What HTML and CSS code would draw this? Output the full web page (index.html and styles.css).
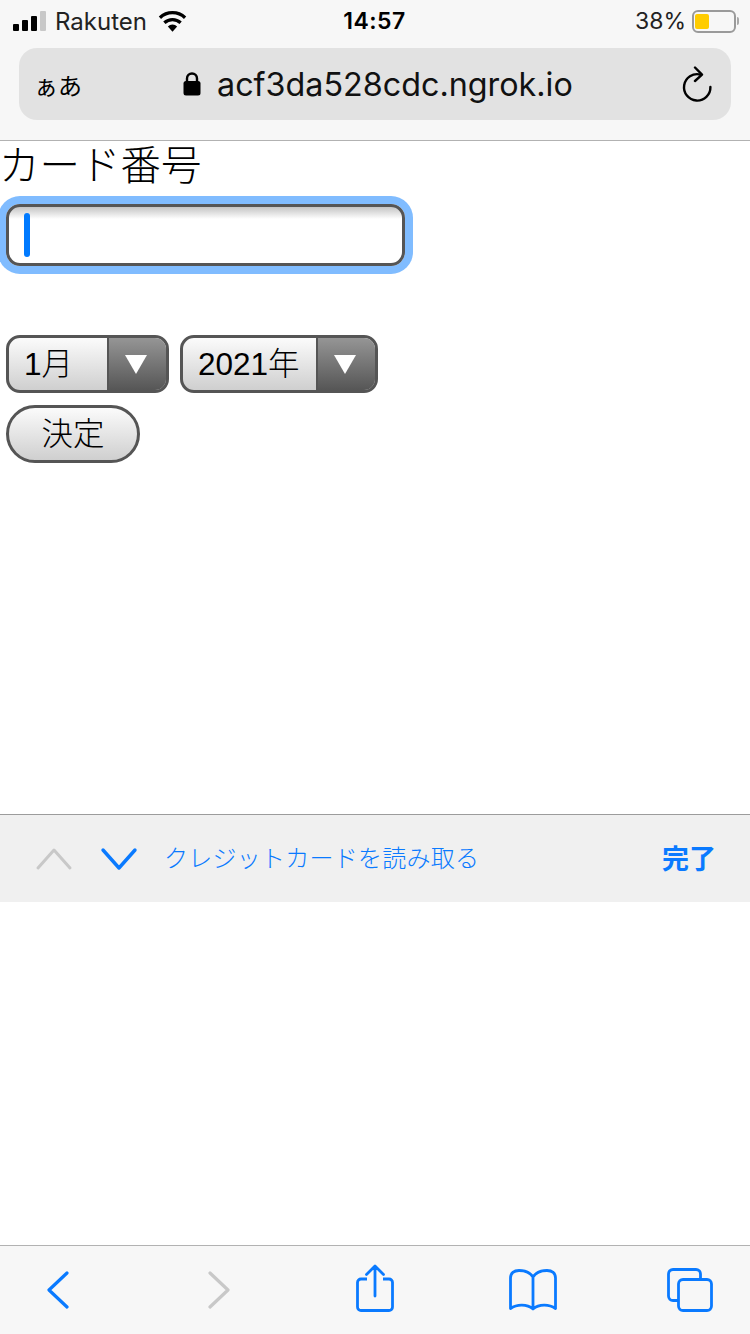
FILE: index.html
```html
<!DOCTYPE html>
<html lang="ja">
<head>
    <meta charset="UTF-8">
    <meta name="viewport" content="width=device-width, initial-scale=1.0">
    <title>カード番号</title>
    <link rel="stylesheet" href="styles.css">
</head>
<body>
    <header class="browser-top">
        <div class="status-bar">
            <div class="status-left">
                <div class="signal"><span></span><span></span><span></span><span class="off"></span></div>
                <span class="carrier">Rakuten</span>
                <svg class="wifi" width="31" height="24" viewBox="0 0 32 24">
                    <path d="M16 23 L11.2 17.6 A7 7 0 0 1 20.8 17.6 Z" fill="#000"/>
                    <path d="M7.6 13.8 A12.4 12.4 0 0 1 24.4 13.8" fill="none" stroke="#000" stroke-width="3.4"/>
                    <path d="M3 8.6 A19 19 0 0 1 29 8.6" fill="none" stroke="#000" stroke-width="3.4"/>
                </svg>
            </div>
            <div class="clock">14:57</div>
            <div class="status-right">
                <span class="percent">38%</span>
                <div class="battery"><div class="battery-level"></div></div>
                <div class="battery-tip"></div>
            </div>
        </div>
        <div class="url-bar">
            <span class="text-size">ぁあ</span>
            <div class="address">
                <svg width="18" height="26" viewBox="0 0 18 26">
                    <path d="M4 11 V7.5 A5 5 0 0 1 14 7.5 V11" fill="none" stroke="#000" stroke-width="2.4"/>
                    <rect x="0.5" y="10" width="17" height="14.5" rx="2.5" fill="#000"/>
                </svg>
                <span>acf3da528cdc.ngrok.io</span>
            </div>
            <svg class="reload" width="32" height="38" viewBox="0 0 32 38">
                <path d="M19.5 8.6 A13.2 13.2 0 1 0 29.4 21" fill="none" stroke="#000" stroke-width="2.4" stroke-linecap="round"/>
                <path d="M14 1.5 L21 8.6 L14 15" fill="none" stroke="#000" stroke-width="2.4" stroke-linecap="round" stroke-linejoin="round"/>
            </svg>
        </div>
    </header>

    <main class="content">
        <div class="card-label">カード番号</div>
        <div class="card-input"><div class="caret"></div></div>
        <div class="expiry">
            <div class="select month">
                <span class="select-value">1月</span>
                <div class="select-arrow"><div class="triangle"></div></div>
            </div>
            <div class="select year">
                <span class="select-value">2021年</span>
                <div class="select-arrow"><div class="triangle"></div></div>
            </div>
        </div>
        <div class="submit">決定</div>
    </main>

    <div class="form-bar">
        <svg class="nav-up" width="40" height="24" viewBox="0 0 40 24">
            <path d="M4 21 L20 3 L36 21" fill="none" stroke="#c8c8c8" stroke-width="3" stroke-linecap="round" stroke-linejoin="round"/>
        </svg>
        <svg class="nav-down" width="40" height="24" viewBox="0 0 40 24">
            <path d="M4 3 L20 21 L36 3" fill="none" stroke="#0a7aff" stroke-width="3.4" stroke-linecap="round" stroke-linejoin="round"/>
        </svg>
        <span class="scan-card">クレジットカードを読み取る</span>
        <span class="done">完了</span>
    </div>

    <div class="keyboard-space"></div>

    <footer class="toolbar">
        <svg width="24" height="38" viewBox="0 0 24 38">
            <path d="M21 2 L3 19 L21 36" fill="none" stroke="#0a7aff" stroke-width="3.2" stroke-linecap="round" stroke-linejoin="round"/>
        </svg>
        <svg width="24" height="38" viewBox="0 0 24 38">
            <path d="M3 2 L21 19 L3 36" fill="none" stroke="#c8c8c8" stroke-width="3.2" stroke-linecap="round" stroke-linejoin="round"/>
        </svg>
        <svg class="share" width="38" height="48" viewBox="0 0 38 48">
            <path d="M11 15 H5 A3.5 3.5 0 0 0 1.5 18.5 V43 A3.5 3.5 0 0 0 5 46.5 H33 A3.5 3.5 0 0 0 36.5 43 V18.5 A3.5 3.5 0 0 0 33 15 H27" fill="none" stroke="#0a7aff" stroke-width="2.8"/>
            <path d="M19 32 V2.5 M10.5 10.5 L19 2 L27.5 10.5" fill="none" stroke="#0a7aff" stroke-width="2.8" stroke-linecap="round" stroke-linejoin="round"/>
        </svg>
        <svg width="48" height="42" viewBox="0 0 48 42">
            <path d="M24 8 C21 3 16 1.5 10 1.5 C5 1.5 1.5 4 1.5 9 V39.5 C8 35 18 35 24 40 C30 35 40 35 46.5 39.5 V9 C46.5 4 43 1.5 38 1.5 C32 1.5 27 3 24 8 Z M24 8 V40" fill="none" stroke="#0a7aff" stroke-width="2.8" stroke-linejoin="round"/>
        </svg>
        <svg width="46" height="44" viewBox="0 0 46 44">
            <path d="M33.5 11 V6 A4.5 4.5 0 0 0 29 1.5 H6 A4.5 4.5 0 0 0 1.5 6 V28 A4.5 4.5 0 0 0 6 32.5 H11" fill="none" stroke="#0a7aff" stroke-width="2.8"/>
            <rect x="11.5" y="11.5" width="33" height="31" rx="4.5" fill="none" stroke="#0a7aff" stroke-width="2.8"/>
        </svg>
    </footer>
</body>
</html>
```

FILE: styles.css
```css
* {
    box-sizing: border-box;
}
body {
    margin: 0;
    width: 750px;
    height: 1334px;
    overflow: hidden;
    background-color: #fff;
    color: #000;
    font-family: Inter, "Liberation Sans", "Noto Sans CJK JP", sans-serif;
    display: flex;
    flex-direction: column;
}
.browser-top {
    height: 141px;
    flex: none;
    background-color: #f7f7f7;
    border-bottom: 1px solid #b2b2b2;
}
.status-bar {
    height: 48px;
    padding: 0 11px 6px 13px;
    display: grid;
    grid-template-columns: 1fr auto 1fr;
    align-items: center;
}
.status-left {
    display: flex;
    align-items: center;
}
.signal {
    display: flex;
    align-items: flex-end;
    gap: 3px;
    height: 20px;
    margin-top: -1px;
}
.signal span {
    width: 6px;
    background-color: #000;
    border-radius: 1px;
}
.signal span:nth-child(1) { height: 7px; }
.signal span:nth-child(2) { height: 11px; }
.signal span:nth-child(3) { height: 15px; }
.signal span:nth-child(4) { height: 20px; }
.signal .off {
    background-color: #c8c8c8;
}
.carrier {
    margin-left: 9px;
    font-size: 24px;
    color: #222;
}
.wifi {
    margin-left: 10px;
}
.clock {
    margin-right: 3px;
    font-size: 23px;
    font-weight: 600;
    letter-spacing: 0.5px;
}
.status-right {
    display: flex;
    align-items: center;
    justify-content: flex-end;
}
.percent {
    font-size: 23px;
    color: #222;
    margin-right: 6px;
}
.battery {
    width: 44px;
    height: 23px;
    padding: 2px 1px;
    border: 2px solid #9a9a9a;
    border-radius: 6px;
}
.battery-level {
    width: 14px;
    height: 100%;
    background-color: #ffcc00;
    border-radius: 2px;
}
.battery-tip {
    width: 2px;
    height: 8px;
    margin-left: 1px;
    background-color: #a8a8a8;
    border-radius: 0 2px 2px 0;
}
.url-bar {
    height: 72px;
    margin: 0 19px;
    padding: 0 18px;
    background-color: #e2e2e2;
    border-radius: 18px;
    display: flex;
    align-items: center;
}
.text-size {
    width: 149px;
    margin-left: -3px;
    font-size: 24px;
}
.address {
    display: flex;
    align-items: center;
    gap: 16px;
    flex: 1;
    font-size: 32.3px;
    color: #111;
}
.reload {
    margin-top: 2px;
}

.content {
    height: 673px;
    flex: none;
    padding: 0 6px;
}
.card-label {
    height: 55px;
    margin-left: -7px;
    font-size: 40.5px;
    line-height: 50px;
    font-weight: 300;
    font-family: "Liberation Sans", "Noto Sans CJK JP", sans-serif;
}
.card-input {
    width: 399px;
    height: 62px;
    margin-top: 8px;
    padding: 6px 15px;
    border: 3px solid #555;
    border-radius: 14px;
    background: linear-gradient(#c4c4c4 0, #fff 12px);
    box-shadow: 0 0 0 8px #80bcff;
}
.caret {
    width: 6px;
    height: 44px;
    background-color: #007aff;
    border-radius: 3px;
}
.expiry {
    display: flex;
    gap: 11px;
    margin-top: 69px;
}
.select {
    height: 58px;
    display: flex;
    border: 3px solid #555;
    border-radius: 14px;
    overflow: hidden;
    background: linear-gradient(#fbfbfb, #cfcfcf);
    font-family: "Liberation Sans", "Noto Sans CJK JP", sans-serif;
    font-size: 31.5px;
    font-weight: 300;
}
.month {
    width: 163px;
}
.year {
    width: 198px;
}
.select-value {
    flex: 1;
    padding-left: 15px;
    line-height: 53px;
}
.select-arrow {
    width: 59px;
    padding-right: 4px;
    border-left: 2px solid #555;
    background: linear-gradient(#959595, #565656);
    display: flex;
    align-items: center;
    justify-content: center;
}
.triangle {
    width: 0;
    height: 0;
    border-left: 11px solid transparent;
    border-right: 11px solid transparent;
    border-top: 19px solid #fff;
}
.submit {
    width: 134px;
    height: 58px;
    margin-top: 12px;
    border: 3px solid #555;
    border-radius: 29px;
    background: linear-gradient(#fbfbfb, #cfcfcf);
    text-align: center;
    font-family: "Liberation Sans", "Noto Sans CJK JP", sans-serif;
    font-size: 31.5px;
    font-weight: 300;
    line-height: 53px;
}

.form-bar {
    height: 88px;
    flex: none;
    padding: 0 34px 4px;
    background-color: #f0f0f0;
    border-top: 1px solid #9c9c9c;
    display: flex;
    align-items: center;
}
.nav-up {
    margin-top: 4px;
}
.nav-down {
    margin: 4px 0 0 25px;
}
.scan-card {
    margin-left: 25px;
    flex: 1;
    color: #0a7aff;
    font-size: 24px;
    letter-spacing: 0.25px;
    font-family: "Noto Sans CJK JP", sans-serif;
    font-weight: 300;
}
.done {
    margin-top: 2px;
    color: #0a7aff;
    font-size: 27px;
    font-weight: 700;
    font-family: "Noto Sans CJK JP", sans-serif;
}
.keyboard-space {
    flex: 1;
}
.toolbar {
    height: 89px;
    flex: none;
    padding-left: 46px;
    background-color: #f7f7f7;
    border-top: 1px solid #b2b2b2;
    display: grid;
    grid-template-columns: 161px 149px 153px 158px 1fr;
    align-items: center;
}
.share {
    margin-bottom: 4px;
}
```
